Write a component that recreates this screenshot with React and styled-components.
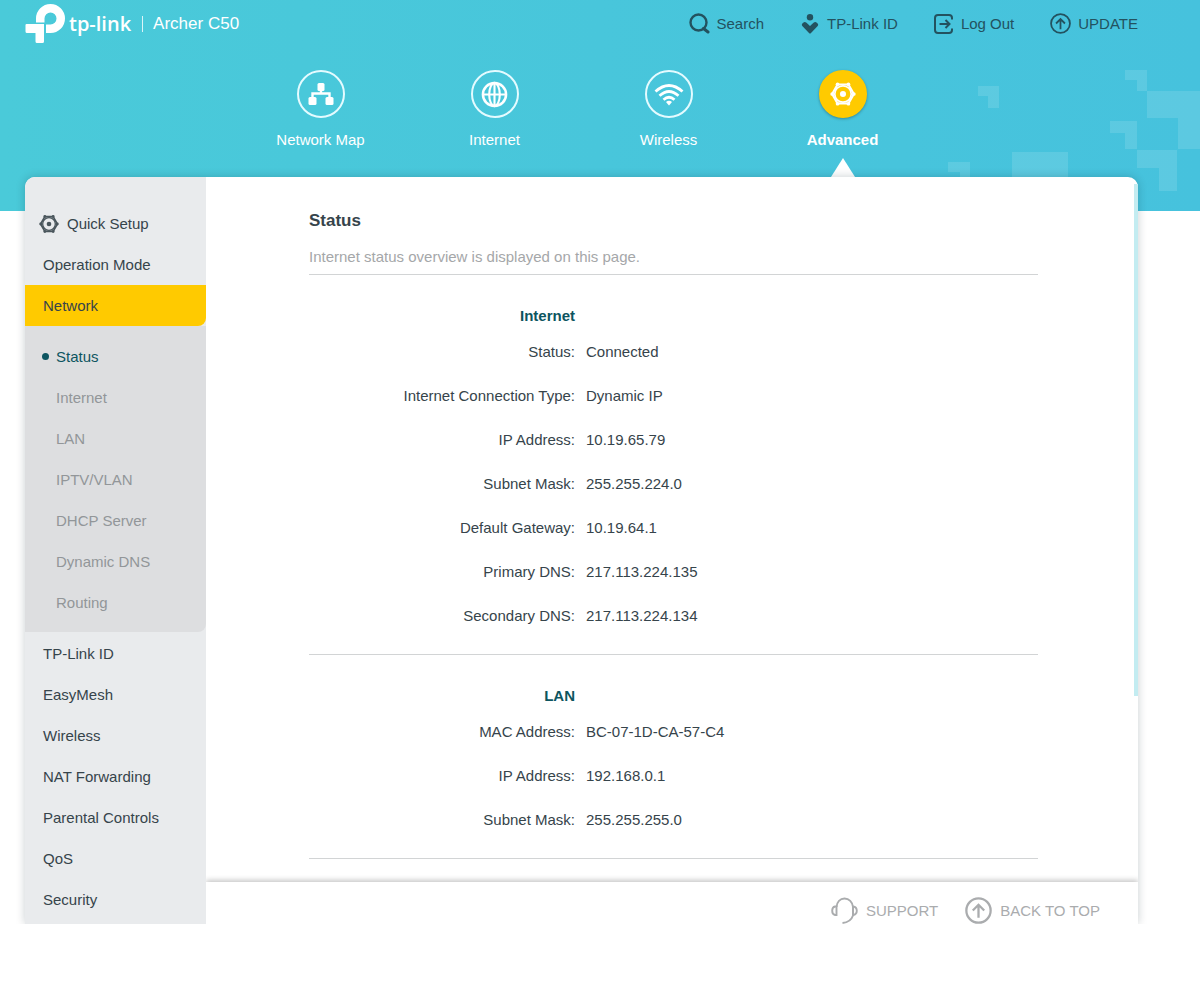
import React from 'react';
import styled, { createGlobalStyle } from 'styled-components';

const GlobalStyle = createGlobalStyle`
  * {
    box-sizing: border-box;
  }

  body {
    margin: 0;
    background: #fff;
    color: #36444b;
    font-family: 'Liberation Sans', Arial, sans-serif;
    font-size: 15px;
    line-height: 20px;
  }

  a {
    color: inherit;
    text-decoration: none;
  }

  ul, dl, dd, h1, h2, p {
    margin: 0;
    padding: 0;
    list-style: none;
  }
`;

const Header = styled.header`
  position: relative;
  height: 211px;
  padding: 0 62px 0 25px;
  background: linear-gradient(90deg, #4acad9, #46c2dd);
`;

const Pattern = styled.svg`
  position: absolute;
  top: 60px;
  right: 0;
  fill: rgba(255, 255, 255, 0.12);
`;

const TopBar = styled.div`
  display: flex;
  align-items: center;
  justify-content: space-between;
  height: 47px;
`;

const Brand = styled.a`
  display: flex;
  align-items: center;
  color: #fff;
`;

const BrandName = styled.span`
  margin-left: 3px;
  font-family: 'Open Sans', sans-serif;
  font-size: 20px;
  font-weight: 600;
`;

const Model = styled.span`
  margin-left: 11px;
  padding-left: 10px;
  border-left: 1px solid rgba(255, 255, 255, 0.8);
  font-size: 17px;
  line-height: 16px;
`;

const Tools = styled.div`
  display: flex;
  gap: 36px;
`;

const Tool = styled.a`
  display: flex;
  align-items: center;
  gap: 7px;
  color: #23525f;
`;

const Tabs = styled.nav`
  display: flex;
  justify-content: center;
  padding-top: 23px;
`;

const Tab = styled.a`
  display: flex;
  flex-direction: column;
  align-items: center;
  width: 174px;
  color: #fff;
  font-weight: ${({ $active }) => ($active ? 'bold' : 'normal')};

  &::after {
    content: '';
    display: ${({ $active }) => ($active ? 'block' : 'none')};
    margin-top: 8px;
    border: solid transparent;
    border-width: 0 12px 19px;
    border-bottom-color: #fff;
  }
`;

const TabIcon = styled.span`
  display: flex;
  align-items: center;
  justify-content: center;
  width: 48px;
  height: 48px;
  margin-bottom: 12px;
  border: 2px solid ${({ $active }) => ($active ? '#ffca00' : '#e4fbff')};
  border-radius: 50%;
  background: ${({ $active }) => ($active ? '#ffca00' : 'transparent')};
  box-shadow: ${({ $active }) => ($active ? '0 1px 3px rgba(0, 0, 0, 0.3)' : 'none')};
`;

const Panel = styled.div`
  position: relative;
  display: flex;
  margin: -34px 62px 0 25px;
  border-radius: 10px 10px 0 0;
  background: #fff;
  box-shadow: 0 0 10px rgba(0, 30, 40, 0.22);
  clip-path: inset(-10px -12px 0 -12px);
`;

const Sidebar = styled.nav`
  flex: none;
  width: 181px;
  padding: 26px 0 4px;
  border-radius: 10px 0 0 0;
  background: #e9ebed;
`;

const MenuLink = styled.a`
  display: flex;
  align-items: center;
  gap: 8px;
  height: 41px;
  padding-left: ${({ $icon }) => ($icon ? 14 : 18)}px;
  border-radius: 0 0 8px 0;
  background: ${({ $active }) => ($active ? '#ffca00' : 'transparent')};
`;

const SubMenuWrap = styled.div`
  margin-bottom: 1px;
  padding: 10px 0 9px;
  border-radius: 0 0 8px 0;
  background: #dddee0;
`;

const SubLink = styled.a`
  display: flex;
  align-items: center;
  gap: 7px;
  height: 41px;
  padding-left: 17px;
  color: ${({ $active }) => ($active ? '#0d5560' : '#929699')};

  &::before {
    content: '';
    width: 7px;
    height: 7px;
    border-radius: 50%;
    background: ${({ $active }) => ($active ? '#0d5560' : 'transparent')};
  }
`;

const Main = styled.main`
  flex: 1;
  display: flex;
  flex-direction: column;
  min-width: 0;
`;

const Viewport = styled.div`
  flex: 1;
  display: flex;
`;

const Content = styled.div`
  flex: 1;
  padding: 34px 96px 0 103px;
`;

const ScrollThumb = styled.div`
  width: 4px;
  height: 512px;
  margin-top: 7px;
  background: #c3ecf1;
`;

const Title = styled.h1`
  margin-bottom: 16px;
  font-size: 17px;
  line-height: 20px;
`;

const Intro = styled.p`
  padding-bottom: 7px;
  border-bottom: 1px solid #d2d4d5;
  color: #a5a7a9;
`;

const Section = styled.section`
  padding: 31px 0 16px;
  border-bottom: 1px solid #d2d4d5;
`;

const SectionTitle = styled.h2`
  width: 266px;
  margin-bottom: 4px;
  color: #0d5560;
  font-size: 15px;
  text-align: right;
`;

const Row = styled.div`
  display: grid;
  grid-template-columns: 266px 1fr;
  column-gap: 11px;
  align-items: center;
  height: 44px;

  dt {
    text-align: right;
  }
`;

const Footer = styled.footer`
  display: flex;
  align-items: flex-end;
  justify-content: flex-end;
  gap: 27px;
  height: 42px;
  padding-right: 38px;
  box-shadow: 0 -2px 5px rgba(0, 0, 0, 0.22);
  clip-path: inset(-10px 0 0 0);
  color: #aaacae;
`;

const FooterLink = styled.a`
  display: flex;
  align-items: center;
  gap: 8px;
`;

const LogoMark = () => (
  <svg width="41" height="42" viewBox="25 2 41 42" fill="#fff">
    <path d="M27 23h17v17.500a1.500 1.500 0 0 1-1.500 1.500h-5.500a1.500 1.500 0 0 1-1.500-1.500V32h-8.500a1.500 1.500 0 0 1-1.500-1.500V24a1 1 0 0 1 1-1z" />
    <path d="M36 21.500V17.500A14.500 14.500 0 1 1 50.500 32H46v-8.500h4.500a6 6 0 1 0-6-6v4z" />
  </svg>
);

const NutIcon = ({ size, color }) => (
  <svg width={size} height={size} viewBox="0 0 24 24" fill="none" stroke={color} strokeLinejoin="round">
    <path d="M7 3.200h10l5 8.800-5 8.800H7L2 12z" strokeWidth="2" />
    <circle cx="12" cy="12" r="7.600" strokeWidth="1.600" />
    <circle cx="12" cy="12" r="2.800" fill={color} stroke="none" />
    <g fill={color} stroke="none">
      <circle cx="7" cy="3" r="1.700" />
      <circle cx="17" cy="3" r="1.700" />
      <circle cx="22" cy="12" r="1.700" />
      <circle cx="17" cy="21" r="1.700" />
      <circle cx="7" cy="21" r="1.700" />
      <circle cx="2" cy="12" r="1.700" />
    </g>
  </svg>
);

const SearchIcon = () => (
  <svg width="21" height="21" viewBox="0 0 21 21" fill="none" stroke="currentColor" strokeWidth="2.4" strokeLinecap="round">
    <circle cx="9.500" cy="9.500" r="8" />
    <path d="M14.500 15.500l4.500 3.500" strokeWidth="3" />
  </svg>
);

const CloudIdIcon = () => (
  <svg width="20" height="20" viewBox="0 0 20 20" fill="currentColor">
    <circle cx="10" cy="3.200" r="3.200" />
    <path d="M4.500 8q1.200 0 2 .7L10 12l3.500-3.300q.8-.7 2-.7 1.500.3 2.500 2 .5 1-.3 1.900L11 19q-1 1-2 0L2.300 11.900Q1.500 11 2 10q1-1.700 2.500-2z" />
  </svg>
);

const LogOutIcon = () => (
  <svg width="20" height="20" viewBox="0 0 20 20" fill="none" stroke="currentColor" strokeWidth="2">
    <path d="M18 5.500V4a3 3 0 0 0-3-3H4a3 3 0 0 0-3 3v12a3 3 0 0 0 3 3h11a3 3 0 0 0 3-3v-1.500" />
    <path d="M5.500 10H15M11.500 6l4 4-4 4" />
  </svg>
);

const CircleUpIcon = ({ size, strokeWidth }) => (
  <svg width={size} height={size} viewBox="0 0 26 26" fill="none" stroke="currentColor" strokeWidth={strokeWidth}>
    <circle cx="13" cy="13" r="11.700" />
    <path d="M13 20V8M7.500 13L13 7.500l5.500 5.500" />
  </svg>
);

const HeadsetIcon = () => (
  <svg width="27" height="27" viewBox="0 0 27 27" fill="none" stroke="currentColor" strokeWidth="1.900">
    <path d="M5.500 9.500V18H4q-2.800-.5-2.800-4.200T4 9.500z" />
    <path d="M5.500 10C6 5 9 1.500 13.500 1.500S21.500 5 22 10v8.500C20.500 23 17 25.500 11.500 26" />
    <path d="M22 9.500q3.800.5 3.800 4.300T22 18z" />
  </svg>
);

const MapIcon = () => (
  <svg width="26" height="24" viewBox="0 0 26 24" fill="#fff">
    <rect x="9.500" y="1" width="7" height="8" rx="1.500" />
    <rect x="0.500" y="15" width="8" height="8" rx="1.500" />
    <rect x="17.500" y="15" width="8" height="8" rx="1.500" />
    <path d="M13 7v5M4.500 16v-4.500h17V16" fill="none" stroke="#fff" strokeWidth="2.400" />
  </svg>
);

const GlobeIcon = () => (
  <svg width="27" height="27" viewBox="0 0 28 28" fill="none" stroke="#fff" strokeWidth="2.200">
    <circle cx="14" cy="14" r="12" strokeWidth="2.600" />
    <ellipse cx="14" cy="14" rx="5.500" ry="12" />
    <path d="M14 2v24M2 14h24" />
  </svg>
);

const WifiIcon = () => (
  <svg width="30" height="24" viewBox="0 0 30 24" fill="none" stroke="#fff" strokeWidth="2.800">
    <path d="M1.500 9.500q13.500-12 27 0M5.500 13.700q9.500-8.500 19 0M9.500 17.700q5.500-5 11 0" />
    <path d="M12 20q3-2.500 6 0l-3 3.500z" fill="#fff" stroke="none" />
  </svg>
);

const TABS = [
  { label: 'Network Map', icon: <MapIcon /> },
  { label: 'Internet', icon: <GlobeIcon /> },
  { label: 'Wireless', icon: <WifiIcon /> },
  { label: 'Advanced', icon: <NutIcon size={26} color="#fff" />, active: true },
];

const NETWORK_MENU = ['Status', 'Internet', 'LAN', 'IPTV/VLAN', 'DHCP Server', 'Dynamic DNS', 'Routing'];

const MENU = ['TP-Link ID', 'EasyMesh', 'Wireless', 'NAT Forwarding', 'Parental Controls', 'QoS', 'Security'];

const SECTIONS = [
  {
    title: 'Internet',
    rows: [
      ['Status', 'Connected'],
      ['Internet Connection Type', 'Dynamic IP'],
      ['IP Address', '10.19.65.79'],
      ['Subnet Mask', '255.255.224.0'],
      ['Default Gateway', '10.19.64.1'],
      ['Primary DNS', '217.113.224.135'],
      ['Secondary DNS', '217.113.224.134'],
    ],
  },
  {
    title: 'LAN',
    rows: [
      ['MAC Address', 'BC-07-1D-CA-57-C4'],
      ['IP Address', '192.168.0.1'],
      ['Subnet Mask', '255.255.255.0'],
    ],
  },
];

const App = () => {
  return (
    <>
      <GlobalStyle />
      <Header>
        <Pattern width="260" height="151" viewBox="940 60 260 151">
          <path d="M978 86h21v22h-11v-12h-10z" />
          <path d="M1125 70h22v21h-10v-11h-12z" />
          <path d="M1147 91h53v58h-22v-31h-31z" />
          <path d="M1110 121h27v28h-12v-16h-15z" />
          <path d="M1137 150h40v41h-18v-23h-22z" />
          <path d="M948 162h22v21h-10v-11h-12z" />
          <path d="M1012 152h56v40h-56z" />
        </Pattern>
        <TopBar>
          <Brand href="#">
            <LogoMark />
            <BrandName>tp-link</BrandName>
            <Model>Archer C50</Model>
          </Brand>
          <Tools>
            <Tool href="#search"><SearchIcon />Search</Tool>
            <Tool href="#id"><CloudIdIcon />TP-Link ID</Tool>
            <Tool href="#logout"><LogOutIcon />Log Out</Tool>
            <Tool href="#update"><CircleUpIcon size={21} strokeWidth={2.2} />UPDATE</Tool>
          </Tools>
        </TopBar>
        <Tabs>
          {TABS.map(({ label, icon, active }) => (
            <Tab key={label} href="#" $active={active}>
              <TabIcon $active={active}>{icon}</TabIcon>
              {label}
            </Tab>
          ))}
        </Tabs>
      </Header>

      <Panel>
        <Sidebar>
          <MenuLink href="#" $icon>
            <NutIcon size={20} color="#4a565c" />
            Quick Setup
          </MenuLink>
          <MenuLink href="#">Operation Mode</MenuLink>
          <MenuLink href="#" $active>Network</MenuLink>
          <SubMenuWrap>
            {NETWORK_MENU.map((item) => (
              <SubLink key={item} href="#" $active={item === 'Status'}>{item}</SubLink>
            ))}
          </SubMenuWrap>
          {MENU.map((item) => (
            <MenuLink key={item} href="#">{item}</MenuLink>
          ))}
        </Sidebar>

        <Main>
          <Viewport>
            <Content>
              <Title>Status</Title>
              <Intro>Internet status overview is displayed on this page.</Intro>
              {SECTIONS.map(({ title, rows }) => (
                <Section key={title}>
                  <SectionTitle>{title}</SectionTitle>
                  <dl>
                    {rows.map(([name, value]) => (
                      <Row key={name}>
                        <dt>{name}:</dt>
                        <dd>{value}</dd>
                      </Row>
                    ))}
                  </dl>
                </Section>
              ))}
            </Content>
            <ScrollThumb />
          </Viewport>
          <Footer>
            <FooterLink href="#support"><HeadsetIcon />SUPPORT</FooterLink>
            <FooterLink href="#top"><CircleUpIcon size={27} strokeWidth={2.2} />BACK TO TOP</FooterLink>
          </Footer>
        </Main>
      </Panel>
    </>
  );
};

export default App;
